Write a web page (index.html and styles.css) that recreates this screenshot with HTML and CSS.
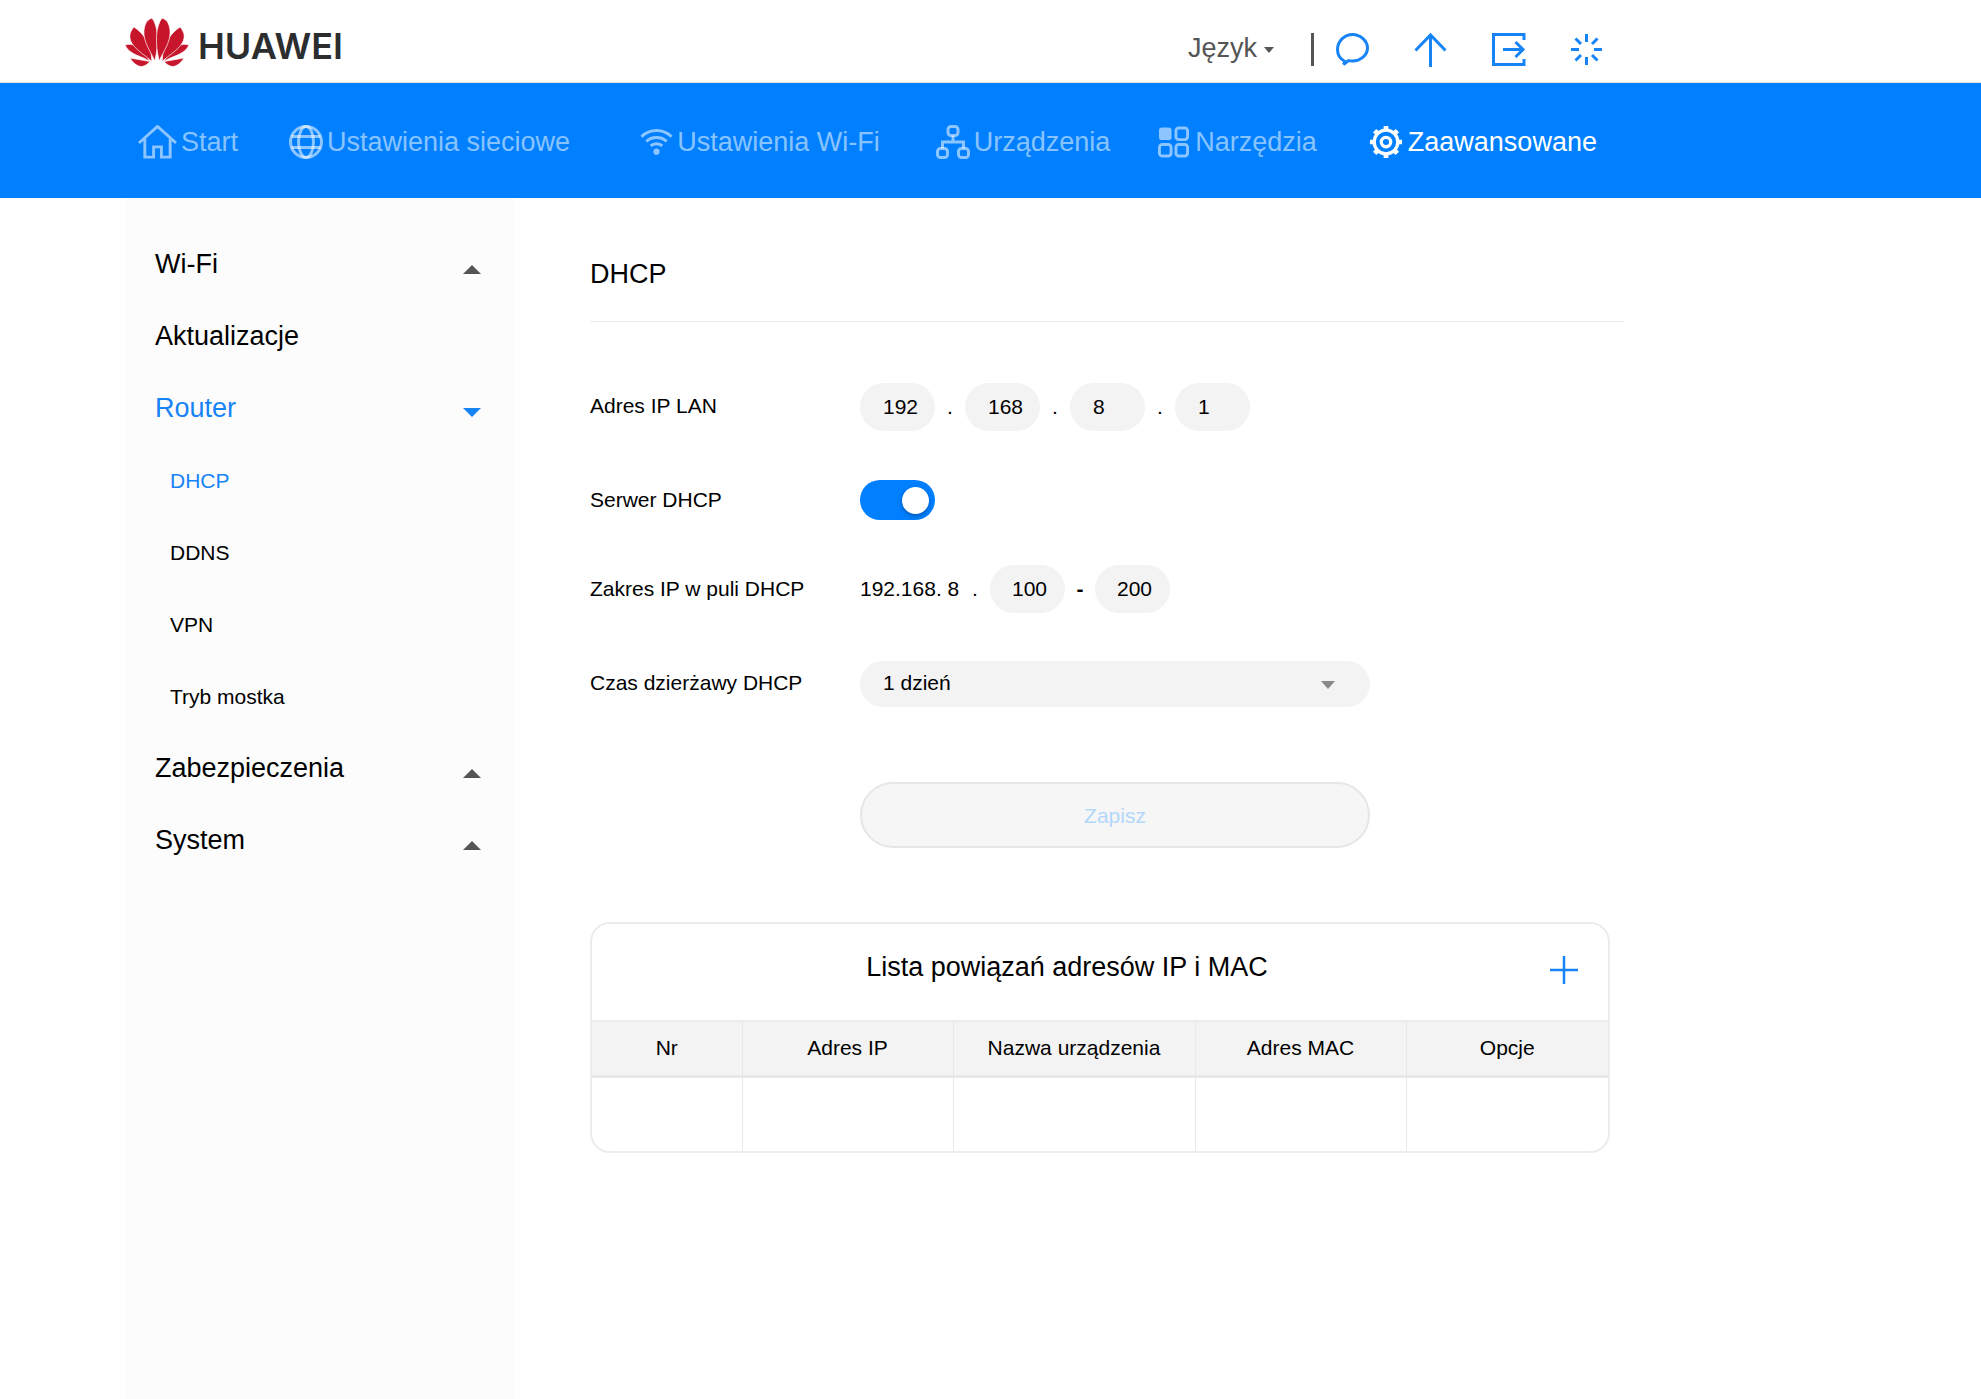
FILE: index.html
```html
<!DOCTYPE html>
<html lang="pl">
<head>
    <meta charset="UTF-8">
    <meta name="viewport" content="width=device-width, initial-scale=1.0">
    <title>DHCP</title>
    <link rel="stylesheet" href="styles.css">
</head>
<body>
    <header class="top-bar">
        <div class="logo">
            <svg class="logo-mark" viewBox="0 0 64 49">
                <defs>
                    <g id="petals">
                        <path d="M24.500 43.500C19 38 5 38 0 27 10 24 21 32 24.500 43.500Z"/>
                        <path d="M25 43.500L5 40C8 45 13 49 17 48.500 20 48 23 46 25 43.500Z"/>
                        <path d="M26.800 43.500C18 35 3 28 5 16 6 13 7 11 9 9 18 15 27 26 26.800 43.500Z"/>
                        <path d="M29.800 43C25 32 15 20 20.500 6 21.500 3 24 1 27 0 33 8 34.500 24 29.800 43Z"/>
                    </g>
                </defs>
                <use href="#petals"/>
                <use href="#petals" transform="matrix(-1 0 0 1 64 0)"/>
            </svg>
            <span class="logo-text">HUAWEI</span>
        </div>
        <div class="top-actions">
            <span class="lang">Język</span>
            <span class="caret caret-lang"></span>
            <span class="separator"></span>
            <svg class="top-icon" viewBox="0 0 33 33">
                <path d="M9 28.500C4 26 1.500 21.800 1.500 16.500 1.500 8 8.500 1.500 16.500 1.500S31.500 8 31.500 15 24.500 28 16.500 28C15 28 13.500 27.900 12.500 27.600L7.500 31.500Z"/>
            </svg>
            <svg class="top-icon" viewBox="0 0 33 33">
                <path d="M16.500 34V2M1.500 17.500L16.500 2 31.500 17.500"/>
            </svg>
            <svg class="top-icon" viewBox="0 0 33 33">
                <path d="M32 7V1.500H1.500V31.500H32V26M11 16.500H31M23.500 9L31 16.500 23.500 24"/>
            </svg>
            <svg class="top-icon" viewBox="0 0 33 33">
                <path d="M16.500 1V9M16.500 24V32M1 16.500H9M24 16.500H32M5.500 5.500L11 11M22 22L27.500 27.500M27.500 5.500L22 11M11 22L5.500 27.500"/>
            </svg>
        </div>
    </header>

    <nav class="main-nav">
        <a class="nav-item nav-start">
            <svg class="nav-icon icon-home" viewBox="0 0 40 34">
                <path d="M1 18L20 1 39 18M7 14V32.500H16V22H24V32.500H33V14"/>
            </svg>
            Start
        </a>
        <a class="nav-item nav-network">
            <svg class="nav-icon" viewBox="0 0 34 34">
                <circle cx="17" cy="17" r="15.500"/>
                <ellipse cx="17" cy="17" rx="7.500" ry="15.500"/>
                <path d="M2.500 11.500H31.500M2.500 22.500H31.500"/>
            </svg>
            Ustawienia sieciowe
        </a>
        <a class="nav-item nav-wifi">
            <svg class="nav-icon icon-wifi" viewBox="0 0 34 30">
                <path d="M1.500 9.500C10 1 24 1 32.500 9.500M6.500 14.500C12 9 22 9 27.500 14.500M11 19C14 16 20 16 23 19"/>
                <circle class="icon-dot" cx="17" cy="25" r="3.200"/>
            </svg>
            Ustawienia Wi-Fi
        </a>
        <a class="nav-item nav-devices">
            <svg class="nav-icon" viewBox="0 0 34 34">
                <rect x="12" y="1.500" width="10" height="9" rx="3"/>
                <rect x="1.500" y="23.500" width="10" height="9" rx="3"/>
                <rect x="22.500" y="23.500" width="10" height="9" rx="3"/>
                <path d="M17 10.500V17M6.500 23.500V17H27.500V23.500"/>
            </svg>
            Urządzenia
        </a>
        <a class="nav-item nav-tools">
            <svg class="nav-icon icon-tools" viewBox="0 0 32 32">
                <rect class="icon-fill" x="1" y="1" width="13" height="13" rx="3"/>
                <rect x="18.500" y="1.500" width="12" height="12" rx="3"/>
                <rect x="1.500" y="18.500" width="12" height="12" rx="3"/>
                <rect x="18.500" y="18.500" width="12" height="12" rx="3"/>
            </svg>
            Narzędzia
        </a>
        <a class="nav-item active">
            <svg class="nav-icon icon-gear" viewBox="0 0 36 36">
                <circle cx="18" cy="18" r="12.500" stroke-width="3.500"/>
                <circle cx="18" cy="18" r="5" stroke-width="3.500"/>
                <path class="gear-teeth" d="M18 1V4.500M18 31.500V35M1 18H4.500M31.500 18H35M6 6L8.500 8.500M27.500 27.500L30 30M30 6L27.500 8.500M8.500 27.500L6 30"/>
            </svg>
            Zaawansowane
        </a>
    </nav>

    <div class="page">
        <aside class="sidebar">
            <div class="menu-row">Wi-Fi<span class="caret caret-up"></span></div>
            <div class="menu-row">Aktualizacje</div>
            <div class="menu-row selected">Router<span class="caret caret-down"></span></div>
            <div class="sub-row selected">DHCP</div>
            <div class="sub-row">DDNS</div>
            <div class="sub-row">VPN</div>
            <div class="sub-row">Tryb mostka</div>
            <div class="menu-row">Zabezpieczenia<span class="caret caret-up"></span></div>
            <div class="menu-row">System<span class="caret caret-up"></span></div>
        </aside>

        <main class="content">
            <h1 class="page-title">DHCP</h1>

            <div class="form-row row-lan">
                <label class="form-label">Adres IP LAN</label>
                <span class="ip-box">192</span><span class="ip-dot">.</span>
                <span class="ip-box">168</span><span class="ip-dot">.</span>
                <span class="ip-box">8</span><span class="ip-dot">.</span>
                <span class="ip-box">1</span>
            </div>

            <div class="form-row row-server">
                <label class="form-label">Serwer DHCP</label>
                <span class="toggle"><span class="toggle-knob"></span></span>
            </div>

            <div class="form-row row-range">
                <label class="form-label">Zakres IP w puli DHCP</label>
                <span class="ip-prefix">192.168. 8</span><span class="ip-dot range-dot">.</span>
                <span class="ip-box range-box">100</span><span class="ip-dot range-dash">-</span>
                <span class="ip-box range-box">200</span>
            </div>

            <div class="form-row row-lease">
                <label class="form-label">Czas dzierżawy DHCP</label>
                <span class="select-box">1 dzień<span class="caret caret-select"></span></span>
            </div>

            <div class="form-actions">
                <button class="save-btn" disabled>Zapisz</button>
            </div>

            <section class="bind-card">
                <div class="bind-head">
                    <h2 class="bind-title">Lista powiązań adresów IP i MAC</h2>
                    <span class="bind-add"><svg viewBox="0 0 28 28"><path d="M14 0V28M0 14H28"/></svg></span>
                </div>
                <table class="bind-table">
                    <colgroup>
                        <col class="col-nr"><col class="col-ip"><col class="col-name"><col class="col-mac"><col>
                    </colgroup>
                    <thead>
                        <tr>
                            <th>Nr</th>
                            <th>Adres IP</th>
                            <th>Nazwa urządzenia</th>
                            <th>Adres MAC</th>
                            <th>Opcje</th>
                        </tr>
                    </thead>
                    <tbody>
                        <tr><td></td><td></td><td></td><td></td><td></td></tr>
                    </tbody>
                </table>
            </section>
        </main>
    </div>
</body>
</html>
```

FILE: styles.css
```css
* {
    box-sizing: border-box;
}
html, body {
    height: 100%;
}
body {
    margin: 0;
    font-family: "Liberation Sans", Arial, sans-serif;
    color: #000;
    background-color: #fff;
    display: flex;
    flex-direction: column;
    overflow: hidden;
}
.top-bar {
    height: 83px;
    flex: none;
    padding-left: 125px;
    display: flex;
    align-items: center;
    justify-content: space-between;
    border-bottom: 1px solid #e4e4e4;
}
.logo {
    display: flex;
    align-items: center;
    margin-top: 3px;
}
.logo-mark {
    width: 64px;
    height: 49px;
    fill: #c7162b;
    stroke: #fff;
    stroke-width: 0.7;
}
.logo-text {
    margin: 6px 0 0 9px;
    font-family: Inter, sans-serif;
    font-size: 36px;
    font-weight: 600;
    color: #2b2d2f;
}
.top-actions {
    display: flex;
    align-items: center;
    margin-right: 378px;
    margin-top: 17px;
}
.lang {
    margin-top: -2px;
    font-size: 27px;
    color: #555;
}
.caret {
    display: inline-block;
    width: 0;
    height: 0;
    border-left: 9px solid transparent;
    border-right: 9px solid transparent;
}
.caret-lang {
    margin-left: 7px;
    border-left-width: 5.500px;
    border-right-width: 5.500px;
    border-top: 6px solid #555;
    margin-top: 1px;
}
.separator {
    width: 3px;
    height: 33px;
    margin-left: 37px;
    background-color: #555;
}
.top-icon {
    width: 33px;
    height: 33px;
    flex: none;
    overflow: visible;
    fill: none;
    stroke: #1683f7;
    stroke-width: 3;
    margin-left: 45px;
}
.separator + .top-icon {
    margin-left: 22px;
}
.main-nav {
    height: 115px;
    flex: none;
    padding: 3px 0 0 138px;
    display: flex;
    align-items: center;
    background-color: #007fff;
}
.nav-item {
    display: flex;
    align-items: center;
    gap: 4px;
    font-size: 27px;
    color: rgba(255, 255, 255, 0.55);
}
.nav-item.active {
    color: #fff;
}
.nav-start {
    margin-right: 51px;
}
.nav-network {
    margin-right: 70px;
}
.nav-wifi {
    margin-right: 56px;
}
.nav-devices {
    margin-right: 48px;
}
.nav-tools {
    margin-right: 52px;
}
.nav-icon {
    width: 34px;
    height: 34px;
    flex: none;
    fill: none;
    stroke: currentColor;
    stroke-width: 3;
}
.icon-home {
    width: 39px;
}
.icon-wifi {
    width: 33px;
}
.icon-tools {
    width: 31px;
    margin-right: 2px;
}
.icon-gear {
    margin-right: 1px;
}
.icon-dot, .icon-fill {
    fill: currentColor;
    stroke: none;
}
.gear-teeth {
    stroke-width: 5;
}
.page {
    flex: 1;
    display: flex;
    padding-left: 125px;
    min-height: 0;
}
.sidebar {
    width: 390px;
    flex: none;
    padding-top: 30px;
    background-color: #fcfcfc;
}
.menu-row, .sub-row {
    height: 72px;
    display: flex;
    align-items: center;
    justify-content: space-between;
    padding: 0 34px 0 30px;
}
.menu-row {
    font-size: 27px;
}
.sub-row {
    padding: 1px 34px 0 45px;
    font-size: 21px;
}
.selected {
    color: #1683f7;
}
.caret-up {
    border-bottom: 9px solid #555;
    margin-top: 10px;
}
.caret-down {
    border-top: 9px solid #1683f7;
    margin-top: 8px;
}
.content {
    width: 1035px;
    margin-left: 75px;
}
.page-title {
    height: 124px;
    margin: 0 0 61px;
    padding-top: 59px;
    font-size: 27px;
    line-height: 34px;
    font-weight: 400;
    border-bottom: 1px solid #ececec;
}
.form-row {
    display: flex;
    align-items: center;
    font-size: 21px;
}
.row-server {
    margin-top: 49px;
}
.row-range {
    margin-top: 45px;
}
.row-lease {
    margin-top: 48px;
}
.form-label {
    width: 270px;
    flex: none;
    margin-top: -1px;
}
.row-lan .form-label, .row-lease .form-label {
    margin-top: -3px;
}
.row-range .form-label {
    margin-top: 0;
}
.ip-box {
    width: 75px;
    height: 48px;
    padding-left: 23px;
    line-height: 48px;
    border-radius: 24px;
    background-color: #f3f3f3;
}
.ip-dot {
    width: 30px;
    text-align: center;
}
.range-box {
    padding-left: 22px;
}
.range-dash {
    font-weight: 700;
}
.ip-prefix {
    width: 100px;
}
.range-dot {
    width: 30px;
}
.toggle {
    width: 75px;
    height: 40px;
    display: flex;
    align-items: center;
    justify-content: flex-end;
    padding-right: 6px;
    border-radius: 20px;
    background-color: #007fff;
}
.toggle-knob {
    width: 27px;
    height: 27px;
    border-radius: 50%;
    background-color: #fff;
    box-shadow: 0 2px 4px rgba(0, 0, 0, 0.3);
}
.select-box {
    width: 510px;
    height: 46px;
    padding: 0 35px 2px 23px;
    display: flex;
    align-items: center;
    justify-content: space-between;
    border-radius: 23px;
    background-color: #f3f3f3;
}
.caret-select {
    border-left-width: 7.500px;
    border-right-width: 7.500px;
    border-top: 8px solid #888;
    margin-top: 4px;
}
.form-actions {
    margin-top: 75px;
    padding-left: 270px;
}
.save-btn {
    width: 510px;
    height: 66px;
    padding-top: 3px;
    font-family: inherit;
    font-size: 21px;
    color: #b3d7fb;
    border: 2px solid #e6e6e6;
    border-radius: 33px;
    background-color: #f6f6f6;
}
.bind-card {
    width: 1020px;
    margin-top: 74px;
    border: 2px solid #ececec;
    border-radius: 20px;
    overflow: hidden;
}
.bind-head {
    height: 96px;
    display: flex;
    align-items: center;
}
.bind-title {
    flex: 1;
    margin: 0 0 10px;
    font-size: 27px;
    font-weight: 400;
    text-align: center;
}
.bind-add {
    width: 66px;
    padding-left: 8px;
    display: flex;
}
.bind-add svg {
    width: 28px;
    height: 28px;
    margin-bottom: 4px;
    fill: none;
    stroke: #1683f7;
    stroke-width: 2.500;
}
.bind-table {
    width: 100%;
    table-layout: fixed;
    border-collapse: collapse;
}
.col-nr {
    width: 150px;
}
.col-ip {
    width: 211px;
}
.col-name {
    width: 242px;
}
.col-mac {
    width: 211px;
}
.bind-table th {
    height: 55px;
    padding-bottom: 2px;
    font-size: 21px;
    font-weight: 400;
    background-color: #f3f3f3;
    border-top: 2px solid #ececec;
    border-bottom: 3px solid #e8e8e8;
}
.bind-table td {
    height: 75px;
}
.bind-table th + th, .bind-table td + td {
    border-left: 1px solid #e8e8e8;
}
```
